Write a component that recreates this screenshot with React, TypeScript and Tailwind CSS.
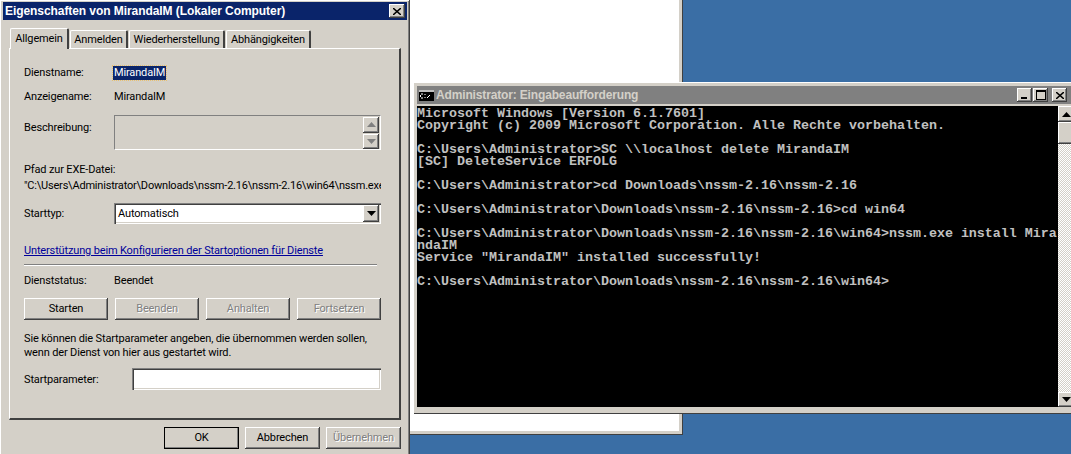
import React from 'react';

const raised = 'bg-[#d4d0c8] shadow-[inset_-1px_-1px_0_#404040,inset_1px_1px_0_#ffffff,inset_-2px_-2px_0_#808080]';
const sunken = 'shadow-[inset_1px_1px_0_#808080,inset_2px_2px_0_#404040,inset_-1px_-1px_0_#ffffff,inset_-2px_-2px_0_#d4d0c8]';
const off = 'text-[#808080] [text-shadow:1px_1px_0_#ffffff]';

const path = 'C:\\Users\\Administrator\\Downloads\\nssm-2.16\\nssm-2.16\\win64>';

const consoleLines = [
  'Microsoft Windows [Version 6.1.7601]',
  'Copyright (c) 2009 Microsoft Corporation. Alle Rechte vorbehalten.',
  '',
  'C:\\Users\\Administrator>SC \\\\localhost delete MirandaIM',
  '[SC] DeleteService ERFOLG',
  '',
  'C:\\Users\\Administrator>cd Downloads\\nssm-2.16\\nssm-2.16',
  '',
  'C:\\Users\\Administrator\\Downloads\\nssm-2.16\\nssm-2.16>cd win64',
  '',
  path + 'nssm.exe install Mira',
  'ndaIM',
  'Service "MirandaIM" installed successfully!',
  '',
  path,
];

const tabs = [
  { label: 'Anmelden', w: 'w-[58px]' },
  { label: 'Wiederherstellung', w: 'w-[96px]' },
  { label: 'Abhängigkeiten', w: 'w-[85px]' },
];

const Arrow = ({ up, dim }: { up?: boolean; dim?: boolean }) => (
  <svg width="9" height="5" viewBox="0 0 9 5" fill={dim ? '#808080' : '#000000'}>
    <path d={up ? 'M4.5 0 9 5H0z' : 'M0 0h9L4.5 5z'} />
  </svg>
);

const Btn = ({ label, w, disabled, def }: { label: string; w: string; disabled?: boolean; def?: boolean }) => (
  <div className={`${w} h-[22px] flex items-center justify-center ${raised} ${disabled ? off : ''} ${def ? 'outline outline-1 -outline-offset-1 outline-black' : ''}`}>
    {label}
  </div>
);

const Row = ({ label, children, className }: { label: string; children: React.ReactNode; className?: string }) => (
  <div className={`flex items-center ${className ?? ''}`}>
    <span className="w-[90px] shrink-0">{label}</span>
    {children}
  </div>
);

const PropertiesDialog = () => (
  <div className={`absolute left-0 top-0 w-[410px] h-[470px] pt-[2px] px-[3px] font-['Roboto',sans-serif] text-[11px] tracking-[-0.15px] leading-[14px] text-black ${raised}`}>
    <div className="h-[18px] bg-[#0a246a] text-white flex items-center justify-between pl-[2px] pr-[2px]">
      <span className="font-['Liberation_Sans',sans-serif] font-bold text-[12px] tracking-[-0.07px] whitespace-nowrap">Eigenschaften von MirandaIM (Lokaler Computer)</span>
      <div className={`w-[16px] h-[14px] flex items-center justify-center ${raised}`}>
        <svg width="8" height="7" viewBox="0 0 8 7" stroke="#000000" strokeWidth="1.5"><path d="M0 0l8 7M8 0 0 7" /></svg>
      </div>
    </div>

    <div className="ml-[6px] mr-[6px] mt-[8px]">
      <div className="flex items-end h-[20px] pl-px">
        <div className="relative z-10 w-[59px] h-[21px] -mb-px bg-[#d4d0c8] border-t border-l border-white border-r-2 border-r-[#404040] rounded-t-[2px] flex items-center justify-center">
          Allgemein
        </div>
        {tabs.map((t) => (
          <div key={t.label} className={`${t.w} ml-px h-[18px] pt-px bg-[#d4d0c8] border-t border-l border-white border-r-2 border-r-[#404040] rounded-t-[2px] flex items-center justify-center`}>
            {t.label}
          </div>
        ))}
      </div>

      <div className="h-[372px] border-t border-l border-white border-r-2 border-b-2 border-r-[#404040] border-b-[#404040] pl-[14px] pr-[18px] pt-[17px]">
        <Row label="Dienstname:">
          <span className="bg-[#0a246a] text-white px-px -ml-px outline outline-1 outline-dotted outline-[#e8c070]">MirandaIM</span>
        </Row>
        <Row label="Anzeigename:" className="mt-[10px]">
          <span>MirandaIM</span>
        </Row>
        <div className="flex mt-[11px]">
          <span className="w-[90px] shrink-0 pt-[6px]">Beschreibung:</span>
          <div className="w-[267px] h-[35px] border border-[#808080] border-r-white border-b-white flex justify-end pr-px pt-px">
            <div className="w-[16px] flex flex-col gap-px">
              <div className={`h-[16px] flex items-center justify-center ${raised}`}><Arrow up dim /></div>
              <div className={`h-[16px] flex items-center justify-center ${raised}`}><Arrow dim /></div>
            </div>
          </div>
        </div>

        <div className="mt-[13px]">Pfad zur EXE-Datei:</div>
        <div className="mt-[2px] w-[357px] overflow-hidden whitespace-nowrap tracking-[-0.2px]">"C:\Users\Administrator\Downloads\nssm-2.16\nssm-2.16\win64\nssm.exe</div>

        <Row label="Starttyp:" className="mt-[10px]">
          <div className={`w-[267px] h-[21px] bg-white flex items-center justify-between pl-[4px] pr-[2px] ${sunken}`}>
            <span>Automatisch</span>
            <div className={`w-[16px] h-[17px] flex items-center justify-center ${raised}`}><Arrow /></div>
          </div>
        </Row>

        <div className="mt-[20px] text-[#00009a] underline whitespace-nowrap">Unterstützung beim Konfigurieren der Startoptionen für Dienste</div>
        <div className="mt-[6px] w-[353px] h-[2px] bg-[#808080] border-b border-white" />

        <Row label="Dienststatus:" className="mt-[8px]">
          <span>Beendet</span>
        </Row>

        <div className="flex mt-[10px] w-[357px] justify-between">
          <Btn label="Starten" w="w-[84px]" />
          <Btn label="Beenden" w="w-[84px]" disabled />
          <Btn label="Anhalten" w="w-[84px]" disabled />
          <Btn label="Fortsetzen" w="w-[84px]" disabled />
        </div>

        <p className="mt-[12px] whitespace-nowrap">
          Sie können die Startparameter angeben, die übernommen werden sollen,
          <br />
          wenn der Dienst von hier aus gestartet wird.
        </p>

        <div className="flex items-center mt-[8px]">
          <span className="w-[108px] shrink-0 pt-[2px]">Startparameter:</span>
          <div className={`w-[249px] h-[22px] bg-white ${sunken}`} />
        </div>
      </div>

      <div className="flex justify-end gap-[6px] mt-[7px]">
        <Btn label="OK" w="w-[75px]" def />
        <Btn label="Abbrechen" w="w-[75px]" />
        <Btn label="Übernehmen" w="w-[75px]" disabled />
      </div>
    </div>
  </div>
);

const CaptionBtn = ({ children, w }: { children: React.ReactNode; w: string }) => (
  <div className={`${w} h-[14px] flex items-center justify-center shrink-0 ${raised}`}>{children}</div>
);

const ConsoleWindow = () => (
  <div className={`absolute left-[413px] top-[82px] w-[670px] h-[332px] p-[4px] bg-[#d4d0c8] shadow-[inset_1px_1px_0_#ffffff,inset_0_-1px_0_#404040]`}>
    <div className="h-[18px] bg-[#808080] flex items-center pl-[2px] pr-[12px] font-['Liberation_Sans',sans-serif] text-[12px] tracking-[-0.15px] font-bold text-[#d4d0c8]">
      <svg width="15" height="11" viewBox="0 0 15 11" className="shrink-0 mr-[2px]">
        <rect width="15" height="11" fill="#000000" />
        <rect width="15" height="2" fill="#c0c0c0" />
        <path d="M2 4h2M1.500 5v2M2 8h2M6 4v1M6 7v1M8 8l3-3" stroke="#ffffff" fill="none" />
      </svg>
      <span className="whitespace-nowrap">Administrator: Eingabeaufforderung</span>
      <div className="ml-auto flex items-center gap-[1px]">
        <CaptionBtn w="w-[15px]">
          <div className="w-[6px] h-[2px] bg-black mt-[6px] -ml-px" />
        </CaptionBtn>
        <CaptionBtn w="w-[15px]">
          <div className="w-[10px] h-[10px] border border-black border-t-2" />
        </CaptionBtn>
        <div className="w-[2px]" />
        <CaptionBtn w="w-[15px]">
          <svg width="8" height="7" viewBox="0 0 8 7" stroke="#000000" strokeWidth="1.5"><path d="M0 0l8 7M8 0 0 7" /></svg>
        </CaptionBtn>
      </div>
    </div>
    <div className="flex h-[301px] mt-[2px]">
      <pre className="w-[641px] shrink-0 bg-black text-[#c0c0c0] pt-[2px] font-['Liberation_Mono',monospace] font-bold text-[13.33px] leading-[12px]">
        {consoleLines.map((line, i) => (
          <div key={i} className="h-[12px]">{line}</div>
        ))}
      </pre>
      <div className="w-[16px] shrink-0 flex flex-col bg-[repeating-conic-gradient(#d4d0c8_0_25%,#ffffff_0_50%)] bg-[length:2px_2px]">
        <div className={`h-[16px] flex items-center justify-center ${raised}`}><Arrow up /></div>
        <div className={`h-[22px] ${raised}`} />
        <div className={`mt-auto h-[15px] flex items-center justify-center ${raised}`}><Arrow /></div>
      </div>
    </div>
  </div>
);

export default function App() {
  return (
    <div className="relative w-[1071px] h-[454px] overflow-hidden bg-[#3a6ea5]">
      {/* white window behind the dialog */}
      <div className="absolute left-[300px] -top-[20px] w-[383px] h-[455px] bg-white border-r border-b border-[#404040] shadow-[inset_-3px_-3px_0_#d4d0c8]" />
      <PropertiesDialog />
      <ConsoleWindow />
    </div>
  );
}
